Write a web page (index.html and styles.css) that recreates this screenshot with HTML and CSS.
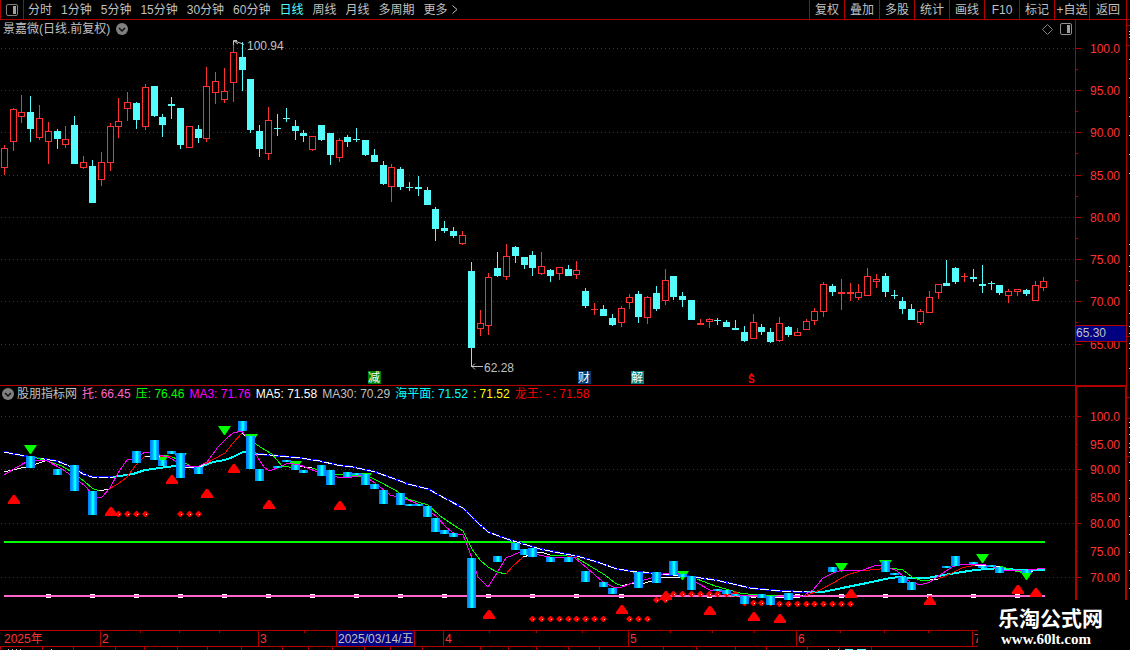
FILE: index.html
```html
<!DOCTYPE html>
<html lang="zh-CN">
<head>
  <meta charset="UTF-8">
  <title>景嘉微 日线</title>
  <meta name="viewport" content="width=device-width, initial-scale=1.0">
  <link rel="stylesheet" href="styles.css">
</head>
<body>
  <header class="toolbar">
    <button class="panel-btn" aria-label="侧栏">
      <svg width="12" height="12"><rect x="0.5" y="0.5" width="11" height="11" rx="1.5" fill="none" stroke="#808080"/><rect x="7" y="2" width="3" height="8" fill="#a0a0a0"/></svg>
    </button>
    <nav class="periods">
      <button>分时</button>
      <button>1分钟</button>
      <button>5分钟</button>
      <button>15分钟</button>
      <button>30分钟</button>
      <button>60分钟</button>
      <button class="active">日线</button>
      <button>周线</button>
      <button>月线</button>
      <button>多周期</button>
      <button class="more">更多
        <svg width="6" height="9"><path d="M0.5 0.5 L5 4.5 L0.5 8.5" fill="none" stroke="#c0c0c0"/></svg>
      </button>
    </nav>
    <div class="tools">
      <button>复权</button>
      <button>叠加</button>
      <button>多股</button>
      <button>统计</button>
      <button>画线</button>
      <button>F10</button>
      <button>标记</button>
      <button>+自选</button>
      <button>返回</button>
    </div>
  </header>

  <main class="workspace">
    <section class="panel">
      <div class="title-row">
        <span>景嘉微(日线.前复权)</span>
        <button class="round" aria-label="展开">
          <svg width="12" height="12"><circle cx="6" cy="6" r="6" fill="#808080"/><path d="M3 5 L6 8 L9 5" fill="none" stroke="#101010" stroke-width="1.5"/></svg>
        </button>
        <div class="corner">
          <svg width="11" height="11"><path d="M5.5 0.5 L10.5 5.5 L5.5 10.5 L0.5 5.5 Z" fill="none" stroke="#808080"/></svg>
          <svg width="12" height="12"><rect x="0.5" y="0.5" width="11" height="11" rx="1.5" fill="none" stroke="#909090"/><rect x="7" y="2" width="3" height="8" fill="#a0a0a0"/></svg>
        </div>
      </div>
      <svg class="plot plot-price"><g id="price" transform="translate(0,-38)"></g></svg>
    </section>
    <svg class="axis axis-price"><g id="priceAxis" transform="translate(0,-20)"></g></svg>

    <section class="panel panel-indicator">
      <div class="legend">
        <button class="round" aria-label="展开指标">
          <svg width="12" height="12"><circle cx="6" cy="6" r="6" fill="#808080"/><path d="M3 5 L6 8 L9 5" fill="none" stroke="#101010" stroke-width="1.5"/></svg>
        </button>
        <span class="name">股朋指标网</span>
        <span class="pink">托: 66.45</span>
        <span class="green">压: 76.46</span>
        <span class="magenta">MA3: 71.76</span>
        <span class="white">MA5: 71.58</span>
        <span class="silver">MA30: 70.29</span>
        <span class="cyan">海平面: 71.52</span>
        <span class="yellow">: 71.52</span>
        <span class="red">龙王: - : 71.58</span>
      </div>
      <svg class="plot plot-indicator"><g id="indicator" transform="translate(0,-402)"></g></svg>
    </section>
    <svg class="axis axis-indicator"><g id="indicatorAxis" transform="translate(0,-385)"></g></svg>
  </main>

  <footer class="timeline">
    <svg class="time-axis"><g id="time" transform="translate(0,-630)"></g></svg>
  </footer>

  <div class="site-mark">
    <strong>乐淘公式网</strong>
    <a href="#">www.60lt.com</a>
  </div>

  <script src="chart.js"></script>
</body>
</html>
```

FILE: styles.css
```css
* {
  box-sizing: border-box;
}

body {
  margin: 0;
  min-height: 100vh;
  position: relative;
  overflow: hidden;
  background: #000;
  color: #c0c0c0;
  font-family: "Liberation Sans", "Noto Sans CJK SC", sans-serif;
  font-size: 12px;
  line-height: 16px;
}

button {
  padding: 0;
  border: none;
  background: none;
  color: inherit;
  font: inherit;
  white-space: nowrap;
  cursor: pointer;
}

svg {
  display: block;
}

/* top bar */
.toolbar {
  display: flex;
  height: 20px;
  padding-right: 3px;
  border-bottom: 1px solid #b00000;
}

.panel-btn {
  display: flex;
  align-items: center;
  justify-content: center;
  width: 24px;
  border-left: 1px solid #b00000;
  border-right: 1px solid #b00000;
}

.periods {
  display: flex;
  flex: 1;
  gap: 9px;
  padding-left: 4px;
}

.periods .active {
  color: #54fcfc;
}

.more {
  display: flex;
  align-items: center;
  gap: 4px;
}

.tools {
  display: flex;
  border-right: 1px solid #b00000;
}

.tools button {
  width: 35px;
  border-left: 1px solid #b00000;
}

.tools button:last-child {
  width: 37px;
}

/* charts */
.workspace {
  display: grid;
  grid-template-columns: 1fr 55px;
}

.panel {
  min-width: 0;
}

.panel-indicator {
  border-top: 1px solid #b00000;
}

.title-row {
  display: flex;
  align-items: center;
  gap: 6px;
  height: 18px;
  padding-left: 3px;
}

.corner {
  display: flex;
  align-items: center;
  gap: 7px;
  margin-left: auto;
  padding-right: 3px;
}

.legend {
  display: flex;
  align-items: center;
  gap: 5px;
  height: 16px;
  padding-left: 2px;
  white-space: nowrap;
}

.legend .round {
  margin-right: -2px;
}

.plot {
  width: 100%;
  overflow: visible;
}

.plot-price {
  height: 347px;
}

.plot-indicator {
  height: 228px;
}

.axis {
  width: 55px;
}

.axis-price {
  height: 365px;
}

.axis-indicator {
  height: 245px;
}

.time-axis {
  width: 100%;
  height: 20px;
}

.plot rect, .plot line, .plot polyline, .axis rect, .axis line, .time-axis rect, .time-axis line {
  shape-rendering: crispEdges;
}

.pink { color: #ff66cc; }
.green { color: #00ff00; }
.magenta { color: #ff00ff; }
.white { color: #ffffff; }
.cyan { color: #00ffff; }
.yellow { color: #ffff00; }
.red { color: #ff0000; }

/* site mark over the lower right corner */
.site-mark {
  position: absolute;
  right: 0;
  bottom: 0;
  display: flex;
  flex-direction: column;
  width: 152px;
  height: 50px;
  padding: 8px 0 0 20px;
  background: #000;
  color: #fff;
}

.site-mark strong {
  font-size: 21px;
  line-height: 22px;
}

.site-mark a {
  padding-left: 3px;
  color: #fff;
  font-family: "Liberation Serif", serif;
  font-size: 15px;
  font-weight: bold;
  line-height: 18px;
  text-decoration: none;
}
```

FILE: chart.js
```javascript
const RED = "#ff3232";
const CYAN = "#54fcfc";
const FRAME = "#b00000";
const NS = "http://www.w3.org/2000/svg";

// direction, high, body top, body bottom, low
const candles = `
r 145 148 168 175|r 108 109 142 151|r 95 112 117 123|c 96 112 129 142|r 105 118 138 140|r 122 131 142 164
c 129 131 139 149|r 126 139 145 148|c 116 125 164 164|r 156 162 168 169|c 160 166 203 203|r 152 162 180 186
r 123 126 163 171|r 98 121 127 138|r 92 102 109 121|c 102 103 120 129|r 84 87 127 130|c 86 86 116 117
c 114 117 125 137|c 97 104 106 119|c 108 108 145 149|r 126 126 148 148|c 125 129 138 143|r 67 86 139 142
r 72 81 93 104|r 68 91 100 103|r 43 52 83 102|c 42 57 70 91|c 79 79 130 133|c 125 131 149 157
r 107 120 154 160|c 114 128 129 136|c 108 118 119 122|c 120 126 131 140|c 130 133 136 142|r 136 136 150 151
c 125 125 140 141|c 133 133 155 165|r 138 140 158 162|c 135 137 142 147|c 128 139 140 142|c 140 140 155 156
c 149 155 162 162|c 161 165 184 185|r 164 167 187 202|c 167 169 187 190|c 182 187 188 191|c 176 187 189 196
c 187 190 205 205|c 207 209 229 241|c 221 228 231 233|c 227 231 236 238|r 231 235 244 245|c 262 271 348 367
r 310 323 329 336|r 273 277 326 335|c 252 268 276 277|r 244 256 277 280|c 246 247 256 263|c 257 257 265 269
c 251 255 268 276|r 252 266 274 275|c 269 270 276 282|r 267 267 274 280|c 265 269 276 276|r 261 270 275 279
c 288 291 306 308|r 303 309 310 315|c 305 309 316 316|c 314 318 325 326|r 306 308 323 327|r 294 297 303 309
c 291 294 317 323|r 296 297 318 324|c 286 293 309 311|r 269 280 301 305|c 276 276 297 300|c 292 296 300 307
c 300 300 320 320|r 319 323 325 325|r 318 319 322 328|c 318 320 321 325|c 320 322 327 327|c 320 328 330 330
c 326 332 341 342|r 314 322 339 339|c 324 327 332 335|c 328 332 342 343|r 317 323 341 342|c 326 327 335 337
r 328 332 336 336|r 319 321 330 330|r 308 311 321 325|r 282 284 312 317|c 284 286 292 296|r 279 292 294 310
r 283 292 294 301|r 284 292 298 300|r 268 276 296 296|r 274 279 282 288|c 273 276 292 297|c 290 295 296 299
c 297 301 309 314|c 304 309 320 320|r 309 311 323 325|r 291 297 313 313|r 284 284 293 299|c 260 283 286 286
c 267 268 282 284|r 273 276 277 282|c 269 277 279 282|c 265 284 286 293|c 281 283 284 290|c 285 285 293 295
r 289 291 296 303|r 289 289 292 296|c 289 290 294 296|r 281 285 301 301|r 277 281 288 291`
  .trim().split(/[|\n]/).map(s => s.split(" "));

// candle index, top, bottom
const bars = [
  [3,456,468],[6,469,475],[8,465,491],[10,491,515],[15,451,463],[17,440,460],[18,460,466],[19,451,454],
  [20,453,478],[22,467,474],[27,421,431],[28,436,469],[29,469,481],[31,466,468],[32,460,462],[33,465,470],
  [34,470,473],[36,465,476],[37,470,485],[39,472,477],[40,473,475],[41,474,485],[42,484,489],[43,490,504],
  [45,493,505],[46,504,506],[47,504,506],[48,506,517],[49,518,532],[50,530,534],[51,533,537],[53,558,608],
  [56,556,562],[58,543,550],[59,549,555],[60,548,557],[62,557,562],[64,557,562],[66,571,582],[68,582,587],
  [69,588,594],[72,572,588],[74,572,583],[76,561,575],[77,574,577],[78,576,590],[81,589,591],[82,590,594],
  [83,594,596],[84,596,604],[86,594,598],[87,596,605],[89,593,600],[94,567,572],[100,561,572],[101,573,575],
  [102,577,583],[103,582,590],[107,566,568],[108,556,566],[110,562,564],[111,566,568],[112,565,567],
  [113,567,573],[116,570,573]
];

const sellMarks = [[30,445],[162,455],[180,453],[224,426],[251,434],[295,461],[365,473],[638,571],[682,571],
  [744,595],[770,595],[841,563],[885,560],[982,554],[1026,571]];
const buyMarks = [[14,495],[111,507],[172,475],[207,489],[234,464],[269,500],[340,501],[489,610],[622,605],
  [666,591],[710,606],[754,612],[780,614],[851,589],[930,596],[1018,585],[1036,588]];

// y, first candle, last candle
const dotRows = [[514,13,16],[514,20,22],[619,60,68],[619,71,73],[600,74,75],[594,76,83],[603,84,87],[604,88,96]];

const maLong = "4,452 30,457 57,461 74,468 83,474 92,477 113,477";
const maLongFall = "258,454 270,455 280,456 300,458 320,461 337,465 353,467 375,472 392,478 408,484 428,489 448,500 463,508 477,522 488,532 507,539 520,543 540,549 560,553 577,556 597,562 617,569 637,572 660,574 695,577 720,581 750,588 780,591 807,592";
const seaRise = [
  "113,477 133,474 145,470 167,467 175,466 183,467",
  "198,468 213,462 225,460 233,457 243,452 253,453 258,454",
  "807,592 823,592 847,587 867,583 890,578 900,577 912,578 927,578 950,574 975,570 1000,568 1017,570 1045,570"
];
const ma3 = "4,475 17,467 30,460 47,461 62,469 75,478 85,486 95,497 102,497 110,488 118,473 127,460 135,459 145,452 157,454 170,458 182,465 197,467 207,462 218,447 226,439 233,433 242,431 250,442 258,458 264,467 269,471 280,467 288,463 300,465 315,471 337,477 347,478 363,475 375,483 390,495 403,498 423,506 437,517 447,528 455,534 463,535 472,558 478,577 488,587 497,573 506,558 520,552 533,554 550,557 575,558 587,568 603,582 613,587 622,587 632,583 648,579 663,574 677,573 690,577 697,583 710,590 727,592 740,595 763,596 803,596 813,590 823,578 833,573 842,570 860,571 877,565 883,565 897,571 910,582 920,585 930,582 943,573 952,567 960,564 983,564 1003,570 1020,571 1045,568";
const ma5 = [
  ["#fff", "4,472 17,469 30,466 45,461"],
  ["#0f0", "34,457 47,461 62,466 75,474 85,482 92,488 99,491"],
  ["#fff", "99,491 109,489"],
  ["#f00", "109,489 118,484 127,477 136,465 145,456"],
  ["#fff", "145,456 160,456"],
  ["#f00", "160,456 172,457"],
  ["#0f0", "172,457 182,461 192,467"],
  ["#fff", "192,467 198,468 205,464"],
  ["#f00", "205,464 225,453 233,443 242,433"],
  ["#fff", "242,433 248,438"],
  ["#0f0", "248,438 260,447 272,454 282,466 295,468"],
  ["#fff", "295,466 312,468"],
  ["#0f0", "312,468 330,474 345,475 370,477 378,481 395,490 408,499 428,505 440,516 455,526 463,531 472,549 480,560 488,567 497,572 506,574"],
  ["#f00", "506,574 513,566 523,557"],
  ["#fff", "523,557 541,552 550,555"],
  ["#0f0", "550,555 567,556"],
  ["#f00", "567,556 577,558"],
  ["#0f0", "577,558 590,566 605,575 615,583 622,586"],
  ["#fff", "622,586 632,583 645,583 655,580 664,577 680,577"],
  ["#0f0", "697,579 715,586 740,593 765,596"],
  ["#fff", "765,597 795,598 805,595"],
  ["#f00", "805,596 820,590 833,583 847,575 860,571 890,568"],
  ["#0f0", "890,568 903,570 912,577 920,580 930,580"],
  ["#fff", "930,580 938,579"],
  ["#f00", "938,579 950,574 962,568 975,565"],
  ["#fff", "975,565 990,566 1000,566"],
  ["#0f0", "1000,566 1015,571 1026,573"],
  ["#fff", "1026,572 1033,571"]
];

function add(parent, tag, attrs, text) {
  const el = document.createElementNS(NS, tag);
  for (const k in attrs) el.setAttribute(k, attrs[k]);
  if (text !== undefined) el.textContent = text;
  parent.appendChild(el);
  return el;
}

function rect(g, x, y, width, height, fill) {
  return add(g, "rect", { x, y, width, height, fill });
}

function label(g, x, y, text, fill, size) {
  return add(g, "text", { x, y, fill, "font-size": size || 12 }, text);
}

function curve(g, points, stroke, width, dash) {
  add(g, "polyline", { points, stroke, fill: "none", "stroke-width": width || 1, "stroke-dasharray": dash || "none" });
}

function gridLine(g, y) {
  add(g, "line", { x1: 1, x2: "100%", y1: y + 0.5, y2: y + 0.5, stroke: FRAME, "stroke-dasharray": "1 3" });
}

function candleX(i) {
  return Math.floor(4.3 + i * 8.81);
}

function drawPrice() {
  const g = document.getElementById("price");
  [48, 90, 132, 175, 217, 259, 301, 344].forEach(y => gridLine(g, y));
  candles.forEach(([dir, high, top, bottom, low], i) => {
    const x = candleX(i);
    const h = Math.max(1, bottom - top);
    const color = dir === "r" ? RED : CYAN;
    rect(g, x, high, 1, low - high, color);
    rect(g, x - 3, top, 7, h, color);
    if (dir === "r" && h > 2) rect(g, x - 2, +top + 1, 5, h - 2, "#000");
  });

  add(g, "path", { d: "M233.5 45 V40.5 H237 M234 41 L238 44 M235 41 L244 44.5", stroke: "#c0c0c0", fill: "none" });
  label(g, 247, 50, "100.94", "#c0c0c0");
  add(g, "path", { d: "M472 366.5 H483 M475 363.5 L472 366.5 L475 369.5", stroke: "#c0c0c0", fill: "none" });
  label(g, 484, 372, "62.28", "#c0c0c0");

  [[368, "减", "#008000"], [578, "财", "#003870"], [631, "解", "#008080"]].forEach(([x, s, bg]) => {
    rect(g, x, 371, 13, 13, bg);
    label(g, x, 382, s, "#fff");
  });
  add(g, "path", { d: "M749 375.5 L751.5 373 L754 375.5 Z", fill: "#f00" });
  label(g, 748, 383, "S", "#f00", 10).setAttribute("font-weight", "bold");
}

function drawPriceAxis() {
  const g = document.getElementById("priceAxis");
  rect(g, 0, 20, 1, 365, FRAME);
  rect(g, 51, 20, 1, 365, FRAME);
  const values = ["100.0", "95.00", "90.00", "85.00", "80.00", "75.00", "70.00", "65.00"];
  [48, 90, 132, 175, 217, 259, 301, 344].forEach((y, i) => {
    rect(g, 1, y, 5, 1, FRAME);
    if (i < 7) rect(g, 1, y + 21, 2, 1, FRAME);
    label(g, 15, y + 5, values[i], RED);
  });
  rect(g, 1, 325, 50, 17, FRAME);
  rect(g, 1, 326, 50, 15, "#000080");
  label(g, 1, 337, "65.30", "#c0c0c0");
  drawEdge(g, [25, 45, 336], [31, 34, 37, 59, 78, 97, 116, 135, 154, 173, 244, 255, 266, 271, 285, 290, 313, 326, 333, 343, 348, 368]);
}

function drawIndicatorAxis() {
  const g = document.getElementById("indicatorAxis");
  rect(g, 0, 385, 52, 2, FRAME);
  rect(g, 0, 385, 2, 245, FRAME);
  rect(g, 50, 385, 2, 245, FRAME);
  [[416, "100.0"], [444, "95.00"], [469, "90.00"], [497, "85.00"], [523, "80.00"], [551, "75.00"], [577, "70.00"]].forEach(([y, s], i) => {
    rect(g, 2, y, i % 2 ? 1 : 4, 1, FRAME);
    label(g, 15, y + 5, s, RED);
  });
  drawEdge(g, [397, 418, 456], [422, 427, 434, 443, 447, 452, 462, 480, 498, 516, 534, 552, 570, 588]);
}

// sliver of the neighbouring quote list
function drawEdge(g, lines, dots) {
  lines.forEach(y => rect(g, 52, y, 3, 1, FRAME));
  dots.forEach(y => rect(g, 54, y, 1, 1, "#c0c0c0"));
}

function drawIndicator() {
  const g = document.getElementById("indicator");
  const grad = add(g, "linearGradient", { id: "bar" });
  [[0, "#0078ff"], [0.35, "#00b4ff"], [0.45, "#00ffff"], [0.65, "#00ffff"], [0.75, "#00a0ff"], [1, "#0078ff"]].forEach(([o, c]) => {
    add(grad, "stop", { offset: o, "stop-color": c });
  });

  [416, 469, 523, 577].forEach(y => gridLine(g, y));
  rect(g, 4, 541, 1041, 2, "#0f0");
  for (let i = 5; i < 119; i += 5) {
    rect(g, candleX(i) - 2, 594, 5, 4, "#fff");
  }
  rect(g, 4, 595, 1041, 2, "#ff66cc");

  sellMarks.forEach(([x, y]) => {
    add(g, "path", { d: `M${x - 6} ${y} H${x + 7} L${x + 1} ${y + 9} H${x} Z`, fill: "#0f0" });
  });

  [maLong, "183,467 198,468", maLongFall].forEach(p => {
    curve(g, p, "#00f", 2);
    curve(g, p, "#fff", 1, "9 2");
  });
  seaRise.forEach(p => curve(g, p, "#0ff", 2));
  ma5.forEach(([color, p]) => curve(g, p, color));
  curve(g, ma3, "#f0f");

  dotRows.forEach(([y, from, to]) => {
    for (let i = from; i <= to; i++) {
      const x = candleX(i);
      add(g, "path", { d: `M${x - 3} ${y} L${x} ${y - 3} H${x + 1} L${x + 4} ${y} L${x + 1} ${y + 3} H${x} Z`, fill: "#f00" });
      rect(g, x + 1, y, 1, 1, "#ffc0c0");
    }
  });
  bars.forEach(([i, top, bottom]) => rect(g, candleX(i) - 4, top, 9, bottom - top, "url(#bar)"));
  buyMarks.forEach(([x, y]) => {
    add(g, "path", { d: `M${x - 6} ${y + 9} V${y + 7} L${x - 1} ${y} H${x + 1} L${x + 6} ${y + 7} V${y + 9} Z`, fill: "#f00" });
  });
}

function drawTime() {
  const g = document.getElementById("time");
  rect(g, 0, 630, "100%", 1, FRAME);
  rect(g, 0, 646, "100%", 1, FRAME);
  [100, 258, 336, 414, 443, 628, 796, 972].forEach(x => rect(g, x, 630, 1, 16, FRAME));
  [140, 179, 219, 304, 489, 536, 582, 670, 712, 754, 840, 884, 928].forEach(x => rect(g, x, 631, 1, 2, FRAME));
  [0, 42, 73, 115, 144, 177, 207, 241, 282, 308, 332, 364, 390, 422, 480, 508, 536, 568, 599, 663, 696, 735, 766, 807, 839, 871].forEach(x => rect(g, x, 647, 1, 3, FRAME));
  [8, 12, 16, 20, 51, 828, 838].forEach(x => rect(g, x, 649, 1, 1, "#c0c0c0"));
  rect(g, 845, 649, 8, 1, CYAN);
  rect(g, 857, 649, 9, 1, CYAN);

  rect(g, 337, 631, 77, 15, "#000080");
  label(g, 338, 643, "2025/03/14/五", "#c0c0c0");
  [[4, "2025年"], [102, "2"], [260, "3"], [445, "4"], [630, "5"], [798, "6"], [974, "7"]].forEach(([x, s]) => {
    label(g, x, 643, s, RED);
  });
}

drawPrice();
drawPriceAxis();
drawIndicator();
drawIndicatorAxis();
drawTime();
```
